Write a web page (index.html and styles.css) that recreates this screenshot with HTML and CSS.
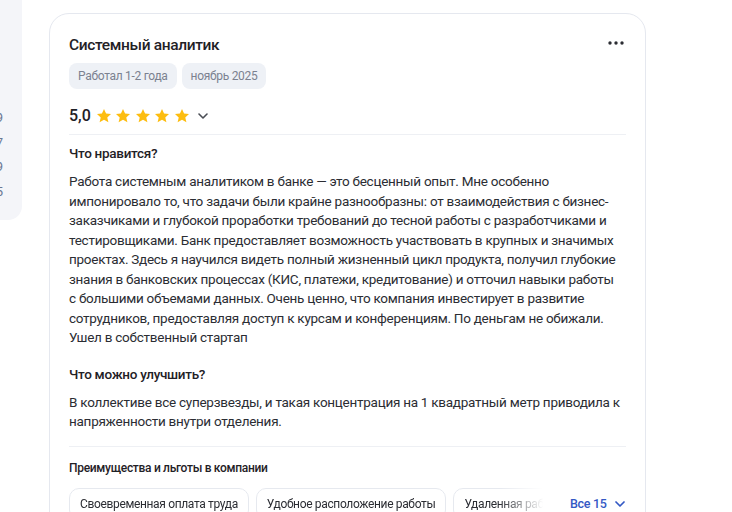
FILE: index.html
```html
<!DOCTYPE html>
<html lang="ru">
<head>
<meta charset="utf-8">
<link rel="stylesheet" href="styles.css">
</head>
<body>
<div class="page">
  <aside class="side">
    <div class="side-num">9</div>
    <div class="side-num">7</div>
    <div class="side-num">9</div>
    <div class="side-num">5</div>
  </aside>
  <article class="card">
    <header class="card-head">
      <h2 class="title">Системный аналитик</h2>
      <button class="more" aria-label="Ещё">
        <svg width="16" height="4" viewBox="0 0 16 4"><circle cx="2" cy="2" r="1.7" fill="#2b2d33"/><circle cx="8" cy="2" r="1.7" fill="#2b2d33"/><circle cx="14" cy="2" r="1.7" fill="#2b2d33"/></svg>
      </button>
    </header>
    <div class="tags">
      <span class="tag">Работал 1-2 года</span>
      <span class="tag">ноябрь 2025</span>
    </div>
    <div class="rating">
      <span class="score">5,0</span>
      <span class="stars">
        <svg class="star" viewBox="0 0 24 24"><path d="M12 1.5l3.1 6.9 7.4.7-5.6 5 1.7 7.4L12 17.7l-6.6 3.8 1.7-7.4-5.6-5 7.4-.7z"/></svg>
        <svg class="star" viewBox="0 0 24 24"><path d="M12 1.5l3.1 6.9 7.4.7-5.6 5 1.7 7.4L12 17.7l-6.6 3.8 1.7-7.4-5.6-5 7.4-.7z"/></svg>
        <svg class="star" viewBox="0 0 24 24"><path d="M12 1.5l3.1 6.9 7.4.7-5.6 5 1.7 7.4L12 17.7l-6.6 3.8 1.7-7.4-5.6-5 7.4-.7z"/></svg>
        <svg class="star" viewBox="0 0 24 24"><path d="M12 1.5l3.1 6.9 7.4.7-5.6 5 1.7 7.4L12 17.7l-6.6 3.8 1.7-7.4-5.6-5 7.4-.7z"/></svg>
        <svg class="star" viewBox="0 0 24 24"><path d="M12 1.5l3.1 6.9 7.4.7-5.6 5 1.7 7.4L12 17.7l-6.6 3.8 1.7-7.4-5.6-5 7.4-.7z"/></svg>
      </span>
      <svg class="chev" width="10" height="6" viewBox="0 0 10 6"><path d="M1 1l4 4 4-4" fill="none" stroke="#4a4d55" stroke-width="1.6" stroke-linecap="round" stroke-linejoin="round"/></svg>
    </div>
    <div class="divider"></div>
    <section class="block">
      <h3 class="block-title">Что нравится?</h3>
      <p class="block-text">Работа системным аналитиком в банке — это бесценный опыт. Мне особенно импонировало то, что задачи были крайне разнообразны: от взаимодействия с бизнес-заказчиками и глубокой проработки требований до тесной работы с разработчиками и тестировщиками. Банк предоставляет возможность участвовать в крупных и значимых проектах. Здесь я научился видеть полный жизненный цикл продукта, получил глубокие знания в банковских процессах (КИС, платежи, кредитование) и отточил навыки работы с большими объемами данных. Очень ценно, что компания инвестирует в развитие сотрудников, предоставляя доступ к курсам и конференциям. По деньгам не обижали. Ушел в собственный стартап</p>
    </section>
    <section class="block block-second">
      <h3 class="block-title">Что можно улучшить?</h3>
      <p class="block-text">В коллективе все суперзвезды, и такая концентрация на 1 квадратный метр приводила к напряженности внутри отделения.</p>
    </section>
    <div class="divider divider-low"></div>
    <h4 class="perks-title">Преимущества и льготы в компании</h4>
    <div class="perks">
      <div class="perk-list">
        <span class="perk">Своевременная оплата труда</span>
        <span class="perk">Удобное расположение работы</span>
        <span class="perk">Удаленная работа</span>
      </div>
      <button class="all">Все 15
        <svg width="10" height="6" viewBox="0 0 10 6"><path d="M1 1l4 4 4-4" fill="none" stroke="#3358c4" stroke-width="1.7" stroke-linecap="round" stroke-linejoin="round"/></svg>
      </button>
    </div>
  </article>
</div>
</body>
</html>
```
FILE: styles.css
```css
* { box-sizing: border-box; }
html, body { margin: 0; padding: 0; background: #fff; }
body {
  font-family: Roboto, "Noto Sans", Arial, sans-serif;
  color: #2b2d33;
  width: 732px;
  height: 512px;
  overflow: hidden;
}
.page {
  display: flex;
  align-items: flex-start;
}
.side {
  width: 22px;
  height: 220px;
  flex: none;
  background: #f4f5f9;
  border-bottom-right-radius: 14px;
  padding-top: 106px;
  padding-right: 19px;
  overflow: hidden;
  display: flex;
  flex-direction: column;
  align-items: flex-end;
}
.side-num {
  font-size: 13px;
  line-height: 24.6px;
  height: 24.6px;
  color: #6b7894;
  white-space: nowrap;
}
.card {
  margin-left: 27px;
  margin-top: 13px;
  width: 597px;
  height: 540px;
  flex: none;
  border: 1px solid #e5e8ef;
  border-radius: 20px;
  padding: 19px 19px 0 19px;
}
.card-head {
  display: flex;
  align-items: center;
  justify-content: space-between;
  height: 24px;
}
.title {
  margin: 0;
  font-size: 15.5px;
  letter-spacing: -0.35px;
  line-height: 24px;
  font-weight: 500;
  color: #1f2126;
}
.more {
  border: 0;
  background: none;
  padding: 0;
  margin-right: 2px;
  margin-top: -4px;
  display: flex;
}
.tags {
  display: flex;
  gap: 5px;
  margin-top: 6px;
}
.tag {
  background: #eef1f6;
  border-radius: 8px;
  font-size: 12px;
  letter-spacing: -0.3px;
  line-height: 18px;
  padding: 4px 9px;
  color: #7b8190;
}
.rating {
  display: flex;
  align-items: center;
  margin-top: 15px;
  height: 24px;
}
.score {
  font-size: 16px;
  line-height: 24px;
  font-weight: 500;
  color: #1f2126;
  margin-right: 5px;
}
.stars {
  display: flex;
  gap: 3.5px;
}
.star {
  width: 16px;
  height: 16px;
  fill: #fdbd10;
  display: block;
}
.chev {
  margin-left: 8px;
  display: block;
}
.divider {
  height: 1px;
  background: #eef0f4;
  margin-top: 6px;
}
.block { margin-top: 8px; }
.block-second { margin-top: 16px; }
.block-title {
  margin: 0;
  font-size: 13.5px;
  letter-spacing: -0.3px;
  line-height: 20px;
  font-weight: 500;
  color: #1f2126;
}
.block-text {
  margin: 9px 0 0;
  padding-right: 3px;
  font-size: 13.5px;
  letter-spacing: -0.26px;
  line-height: 19.5px;
  color: #2b2d33;
}
.divider-low { margin-top: 14px; }
.perks-title {
  margin: 13px 0 0;
  font-size: 12px;
  letter-spacing: -0.3px;
  line-height: 16px;
  font-weight: 500;
  color: #1f2126;
}
.perks {
  display: flex;
  align-items: center;
  margin-top: 12px;
}
.perk-list {
  display: flex;
  gap: 7px;
  width: 476px;
  overflow: hidden;
  flex: none;
  -webkit-mask-image: linear-gradient(to right, #000 430px, transparent 474px);
  mask-image: linear-gradient(to right, #000 430px, transparent 474px);
}
.perk {
  flex: none;
  border: 1px solid #e6e9ef;
  border-radius: 10px;
  padding: 6px 10px;
  font-size: 12px;
  letter-spacing: -0.35px;
  line-height: 18px;
  color: #2b2d33;
  white-space: nowrap;
}
.all {
  flex: none;
  white-space: nowrap;
  margin-left: 25px;
  border: 0;
  background: none;
  padding: 0;
  font-family: inherit;
  font-size: 12.5px;
  letter-spacing: -0.3px;
  font-weight: 500;
  color: #3358c4;
  display: flex;
  align-items: center;
  gap: 8px;
}
```
